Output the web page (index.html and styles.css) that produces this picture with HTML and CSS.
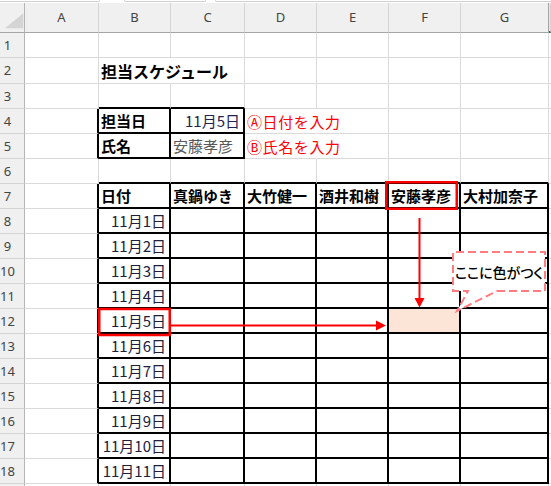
FILE: index.html
```html
<!DOCTYPE html>
<html lang="ja">
<head>
<meta charset="utf-8">
<title>担当スケジュール</title>
<link rel="stylesheet" href="styles.css">
</head>
<body>
<div class="app">
  <div class="topbar"><span class="tab t1"></span><span class="tab t2"></span><span class="tab t3"></span></div>
  <div class="sheet">
    <div class="row head"><span class="corner"><svg width="24" height="29" viewBox="0 0 24 29"><polygon points="5,25.3 23.3,25.3 23.3,10.3" fill="#d4d4d4"/></svg></span><span>A</span><span>B</span><span>C</span><span>D</span><span>E</span><span>F</span><span>G</span><span class="sel"></span></div>
    <div class="row"><span class="rh">1</span><span></span><span></span><span></span><span></span><span></span><span></span><span></span><span></span></div>
    <div class="row title"><span class="rh">2</span><span></span><span class="ttl ov">担当スケジュール</span><span></span><span></span><span></span><span></span><span></span><span></span></div>
    <div class="row above-info"><span class="rh">3</span><span></span><span></span><span></span><span></span><span></span><span></span><span></span><span></span></div>
    <div class="row info"><span class="rh">4</span><span></span><span class="b">担当日</span><span class="r val">11月5日</span><span class="red ov">Ⓐ日付を入力</span><span></span><span></span><span></span><span></span></div>
    <div class="row info"><span class="rh">5</span><span></span><span class="b">氏名</span><span class="gray">安藤孝彦</span><span class="red ov">Ⓑ氏名を入力</span><span></span><span></span><span></span><span></span></div>
    <div class="row above-table"><span class="rh">6</span><span></span><span></span><span></span><span></span><span></span><span></span><span></span><span></span></div>
    <div class="row tbl"><span class="rh">7</span><span></span><span class="b">日付</span><span class="b">真鍋ゆき</span><span class="b">大竹健一</span><span class="b">酒井和樹</span><span class="b">安藤孝彦</span><span class="b">大村加奈子</span><span></span></div>
    <div class="row tbl"><span class="rh">8</span><span></span><span class="r date">11月1日</span><span></span><span></span><span></span><span></span><span></span><span></span></div>
    <div class="row tbl"><span class="rh">9</span><span></span><span class="r date">11月2日</span><span></span><span></span><span></span><span></span><span></span><span></span></div>
    <div class="row tbl"><span class="rh">10</span><span></span><span class="r date">11月3日</span><span></span><span></span><span></span><span></span><span></span><span></span></div>
    <div class="row tbl"><span class="rh">11</span><span></span><span class="r date">11月4日</span><span></span><span></span><span></span><span></span><span></span><span></span></div>
    <div class="row tbl"><span class="rh">12</span><span></span><span class="r date">11月5日</span><span></span><span></span><span></span><span class="hl"></span><span></span><span></span></div>
    <div class="row tbl"><span class="rh">13</span><span></span><span class="r date">11月6日</span><span></span><span></span><span></span><span></span><span></span><span></span></div>
    <div class="row tbl"><span class="rh">14</span><span></span><span class="r date">11月7日</span><span></span><span></span><span></span><span></span><span></span><span></span></div>
    <div class="row tbl"><span class="rh">15</span><span></span><span class="r date">11月8日</span><span></span><span></span><span></span><span></span><span></span><span></span></div>
    <div class="row tbl"><span class="rh">16</span><span></span><span class="r date">11月9日</span><span></span><span></span><span></span><span></span><span></span><span></span></div>
    <div class="row tbl"><span class="rh">17</span><span></span><span class="r date">11月10日</span><span></span><span></span><span></span><span></span><span></span><span></span></div>
    <div class="row tbl"><span class="rh">18</span><span></span><span class="r date">11月11日</span><span></span><span></span><span></span><span></span><span></span><span></span></div>
    <div class="row"><span class="rh"></span><span></span><span></span><span></span><span></span><span></span><span></span><span></span><span></span></div>
  </div>

  <svg class="overlay" width="551" height="486" viewBox="0 0 551 486">
    <rect x="99.25" y="309" width="70.5" height="26" fill="none" stroke="#ff0000" stroke-width="2.5"/>
    <rect x="386.25" y="182.25" width="70.5" height="26.5" fill="none" stroke="#ff0000" stroke-width="2.5"/>
    <line x1="419.5" y1="218" x2="419.5" y2="299" stroke="#ff0000" stroke-width="2"/>
    <polygon points="414.5,298 424.5,298 419.5,307.5" fill="#ff0000"/>
    <line x1="171" y1="325.5" x2="377" y2="325.5" stroke="#ff0000" stroke-width="2"/>
    <polygon points="376,320.5 376,330.5 386,325.5" fill="#ff0000"/>
    <path d="M497,291 L545,291 L545,252 L453,252 L453,291 L468,291 L457,311 Z" fill="#ffffff" stroke="#ff7c80" stroke-width="2" stroke-dasharray="8 4"/>
  </svg>
  <div class="callout">ここに色がつく</div>
</div>
</body>
</html>
```

FILE: styles.css
```css
html, body {
  margin: 0;
  padding: 0;
  background: #ffffff;
}

.app {
  position: relative;
  width: 551px;
  height: 486px;
  overflow: hidden;
  background: #ffffff;
}

.topbar {
  display: flex;
  height: 3px;
  background: #ffffff;
}

.tab {
  height: 1px;
  border-bottom: 1px solid #cfcfcf;
  border-left: 1px solid #cfcfcf;
  border-right: 1px solid #cfcfcf;
  border-radius: 0 0 4px 4px;
}

.t1 { width: 104px; margin-left: -6px; }
.t2 { width: 80px; margin-left: 24px; }
.t3 { flex: 1; margin-left: 9px; margin-right: -6px; }

.row {
  display: grid;
  grid-template-columns: 25px 74px 72px 74px 72px 72px 72px 88px 1fr;
  height: 25px;
}

.row.title { height: 26px; }

.row > span {
  box-sizing: border-box;
  border-right: 1px solid #dadada;
  border-bottom: 1px solid #dadada;
  display: flex;
  align-items: center;
  padding: 0 3px 0 2px;
  white-space: nowrap;
  overflow: visible;
  font-family: "Noto Sans CJK JP", sans-serif;
  font-size: 15px;
  line-height: 1;
  color: #000000;
  min-width: 0;
}

/* column header row */
.row.head { height: 30px; }

.row.head > span {
  background: #f0f0f0;
  border-right-color: #d4d4d4;
  border-bottom-color: #a6a6a6;
  justify-content: center;
  padding: 0;
  font-family: "Noto Sans", "Liberation Sans", sans-serif;
  font-size: 13px;
  color: #444444;
}

.row.head > .corner {
  border-right-color: #b5b5b5;
  align-items: flex-start;
  justify-content: flex-start;
}

.row.head > span:nth-child(8) { border-right-color: #a6a6a6; }

.row.head > .sel {
  border-bottom: 2px solid #217346;
  background: #e6e6e6;
}

/* row header column */
.row > .rh {
  background: #f0f0f0;
  border-right-color: #b5b5b5;
  border-bottom-color: #d4d4d4;
  justify-content: center;
  padding: 0 9px 0 0;
  font-family: "Noto Sans", "Liberation Sans", sans-serif;
  font-size: 13px;
  color: #444444;
}

/* table borders (2px black) */
.above-info > :nth-child(3),
.above-info > :nth-child(4) {
  border-bottom: 2px solid #000000;
}

.info > :nth-child(2) { border-right: 2px solid #000000; }

.info > :nth-child(3),
.info > :nth-child(4) {
  border-right: 2px solid #000000;
  border-bottom: 2px solid #000000;
}

.above-table > :nth-child(n+3):nth-child(-n+8) {
  border-bottom: 2px solid #000000;
}

.tbl > :nth-child(2) { border-right: 2px solid #000000; }

.tbl > :nth-child(n+3):nth-child(-n+8) {
  border-right: 2px solid #000000;
  border-bottom: 2px solid #000000;
}

/* text styles */
.ttl {
  font-size: 16px !important;
  font-weight: 700;
}

.b { font-weight: 700; }

.r { justify-content: flex-end; }

.date { color: #20203c !important; }

.val { color: #232350 !important; }

.gray { color: #595959 !important; }

.red {
  color: #ff0000 !important;
  letter-spacing: 0.6px;
}

.hl { background: #fce4d6; }

.row > .ov { border-right-color: transparent; }

/* overlays */
.overlay {
  position: absolute;
  left: 0;
  top: 0;
  pointer-events: none;
}

.callout {
  position: absolute;
  left: 453px;
  top: 252px;
  width: 92px;
  height: 39px;
  display: flex;
  align-items: center;
  justify-content: center;
  font-family: "Noto Sans CJK JP", sans-serif;
  font-size: 14px;
  font-weight: 500;
  font-feature-settings: "palt";
  color: #000000;
  white-space: nowrap;
}
```
